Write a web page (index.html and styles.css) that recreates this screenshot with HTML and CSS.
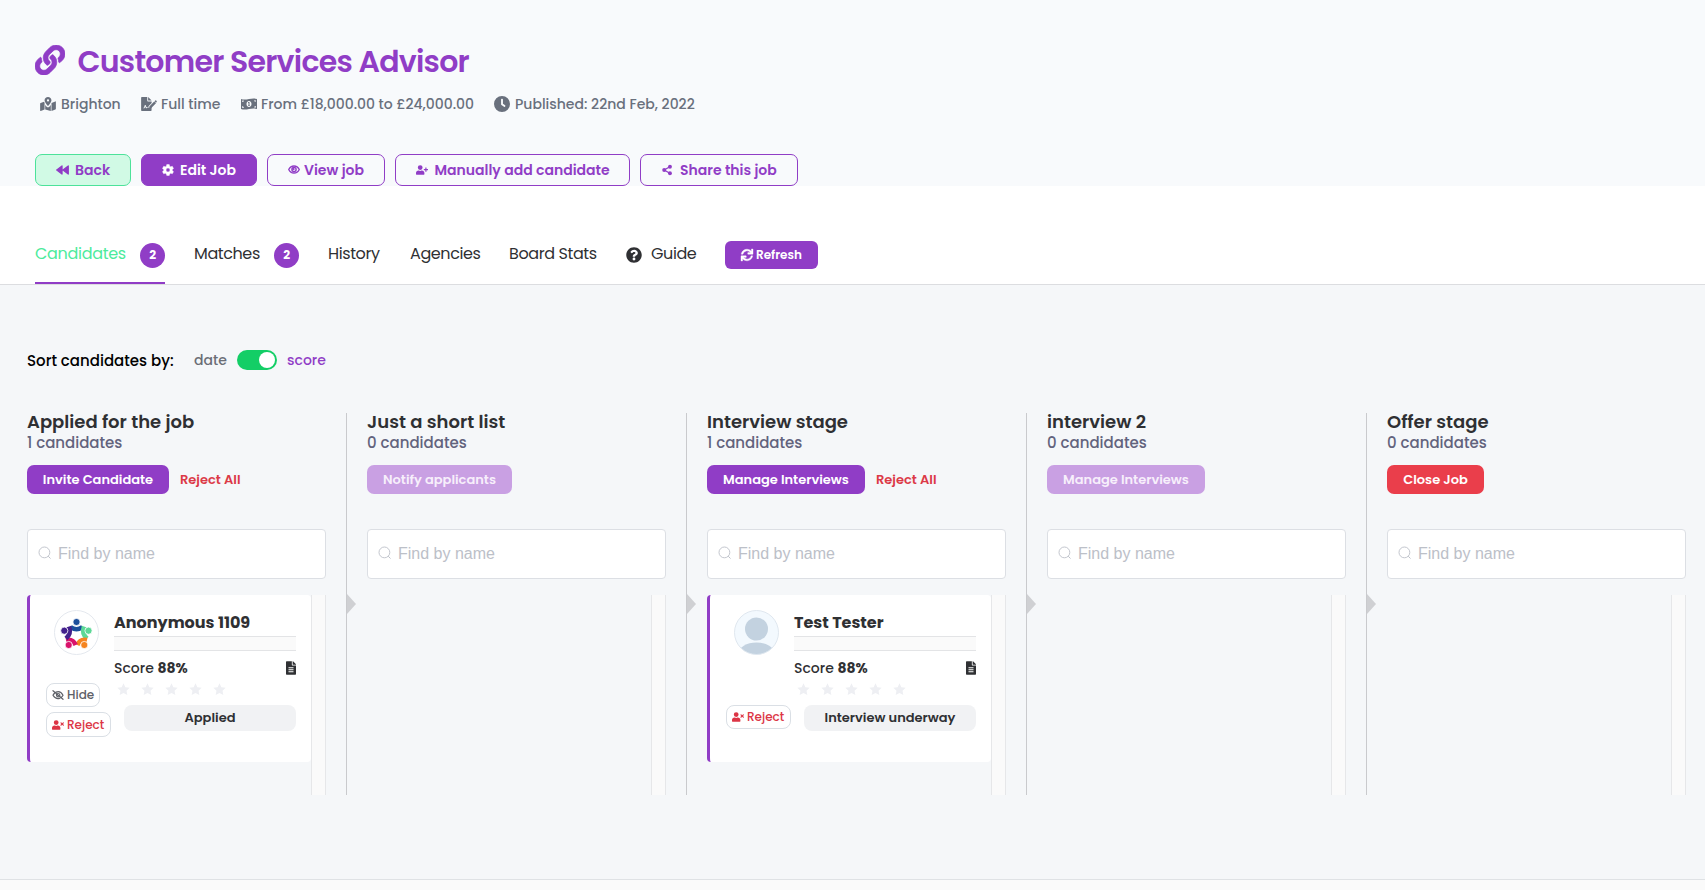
FILE: index.html
```html
<!DOCTYPE html>
<html lang="en">
<head>
<meta charset="utf-8">
<title>Customer Services Advisor</title>
<link rel="stylesheet" href="styles.css">
</head>
<body>
<svg class="defs" aria-hidden="true">
  <symbol id="search" viewBox="0 0 14 14"><circle cx="6.4" cy="6.4" r="5.4" fill="none" stroke="currentColor" stroke-width=".9"/><path d="M10.2 10.2 12.500 12.500" stroke="currentColor"/></symbol>
  <symbol id="star" viewBox="0 0 24 24"><path d="M12 .5l3.400 7.300 8 1-5.800 5.500 1.500 8L12 18.500l-7.100 3.800 1.500-8L.6 8.800l8-1z" fill="currentColor"/></symbol>
  <symbol id="doc" viewBox="0 0 384 512"><path fill="currentColor" fill-rule="evenodd" d="M224 136V0H24C10.700 0 0 10.700 0 24v464c0 13.300 10.700 24 24 24h336c13.300 0 24-10.700 24-24V160H248c-13.200 0-24-10.800-24-24zM288 420H96v-40h192zm0-76H96v-40h192zm0-76H96v-40h192zM384 122v6H256V0h6c6.400 0 12.500 2.500 17 7l98 98c4.500 4.500 7 10.600 7 17z"/></symbol>
  <symbol id="reject" viewBox="0 0 640 512"><path fill="currentColor" d="M224 256a128 128 0 1 0 0-256 128 128 0 0 0 0 256zm90 32h-17a174 174 0 0 1-146 0h-17C60 288 0 348 0 422v42c0 26.500 21.500 48 48 48h352c26.500 0 48-21.500 48-48v-42c0-74-60-134-134-134z"/><path d="M480 140l125 125M605 140L480 265" stroke="currentColor" stroke-width="62" stroke-linecap="round"/></symbol>
</svg>

<header class="header">
  <div class="title">
    <svg class="title-icon" viewBox="0 0 512 512" fill="currentColor"><path d="M326.612 185.391c59.747 59.809 58.927 155.698.36 214.59-.11.12-.24.25-.36.37l-67.2 67.2c-59.27 59.27-155.699 59.262-214.96 0-59.27-59.26-59.27-155.7 0-214.96l37.106-37.106c9.84-9.84 26.786-3.3 27.294 10.606.648 17.722 3.826 35.527 9.69 52.721 1.986 5.822.567 12.262-3.783 16.612l-13.087 13.087c-28.026 28.026-28.905 73.66-1.155 101.96 28.024 28.579 74.086 28.749 102.325.51l67.2-67.19c28.191-28.191 28.073-73.757 0-101.83-3.701-3.694-7.429-6.564-10.341-8.569a16.037 16.037 0 0 1-6.947-12.606c-.396-10.567 3.348-21.456 11.698-29.806l21.054-21.055c5.521-5.521 14.182-6.199 20.584-1.731a152.482 152.482 0 0 1 20.522 17.197zM467.547 44.449c-59.261-59.262-155.69-59.27-214.96 0l-67.2 67.2c-.12.12-.25.25-.36.37-58.566 58.892-59.387 154.781.36 214.59a152.454 152.454 0 0 0 20.521 17.196c6.402 4.468 15.064 3.789 20.584-1.731l21.054-21.055c8.35-8.35 12.094-19.239 11.698-29.806a16.037 16.037 0 0 0-6.947-12.606c-2.912-2.005-6.64-4.875-10.341-8.569-28.073-28.073-28.191-73.639 0-101.83l67.2-67.19c28.239-28.239 74.3-28.069 102.325.51 27.75 28.3 26.872 73.934-1.155 101.96l-13.087 13.087c-4.35 4.35-5.769 10.79-3.783 16.612 5.864 17.194 9.042 34.999 9.69 52.721.509 13.906 17.454 20.446 27.294 10.606l37.106-37.106c59.271-59.259 59.271-155.699.001-214.959z" stroke="currentColor" stroke-width="12"/></svg>
    <h1>Customer Services Advisor</h1>
  </div>
  <div class="meta">
    <div class="meta-item m-place"><svg viewBox="0 0 576 512" fill="currentColor"><path fill-rule="evenodd" d="M288 0c-70 0-126 56-126 126 0 56 82 155 113 191 7 8 19 8 26 0 31-36 113-135 113-191C414 56 358 0 288 0zm0 84a42 42 0 1 1 0 84 42 42 0 0 1 0-84z"/><path d="M20 216A32 32 0 0 0 0 246v250c0 11 11 19 22 15l140-55V214c-8-14-14-28-19-42zM186 290v168l204 52V290c-20 27-42 52-59 72-20 23-66 23-86 0-17-20-39-45-59-72zM554 161l-138 55v296l140-54c12-5 20-17 20-30V176c0-11-11-19-22-15z"/></svg><span>Brighton</span></div>
    <div class="meta-item m-type"><svg viewBox="0 0 576 512" fill="currentColor"><path d="M0 24C0 11 11 0 24 0h200v136c0 13 11 24 24 24h136v60L268 335v45l-30 4c-8-16-30-20-44-8l-22-66c-7-20-35-20-42 0l-22 66c-3 8-8 12-18 12v32c22 0 40-12 48-34l13-40 20 58c5 14 24 16 31 4l8-16h96l76-56v152c0 13-11 24-24 24H24c-13 0-24-11-24-24zM256 0l128 128H256z"/><path d="M300 345l178-178 64 64-178 178h-64zM492 153l28-28c8-8 20-8 28 0l20 20c10 9 10 25 0 35l-26 26z"/></svg><span>Full time</span></div>
    <div class="meta-item m-pay"><svg viewBox="0 0 32 24" fill="currentColor"><path fill-rule="evenodd" d="M0 2c11 4 21-4 32 0v20c-11-4-21 4-32 0zM2.500 5v3c2 0 3-1 3-3zm24-.5c0 2 1 3 3 3v-3zM2.500 16v4h3c0-2-1-4-3-4zm27 0c-2 0-3 1-3 3l3 .5zM16 6c-3 0-5 2.700-5 6s2 6 5 6 5-2.700 5-6-2-6-5-6z"/><path d="M15 8h2v6h1v1.500h-4V14h1v-4h-1V8.500z"/></svg><span>From £18,000.00 to £24,000.00</span></div>
    <div class="meta-item m-date"><svg viewBox="0 0 512 512" fill="currentColor"><path fill-rule="evenodd" d="M256 512a256 256 0 1 0 0-512 256 256 0 0 0 0 512zM226 110c0-13 10.700-24 24-24h12c13 0 24 11 24 24v136l70 52c10 8 12 22 5 32l-8 10c-8 10-23 12-33 5l-82-61c-8-6-12-14-12-24z"/></svg><span>Published: 22nd Feb, 2022</span></div>
  </div>
  <div class="actions">
    <button class="btn btn-back"><svg viewBox="0 0 26 20" fill="currentColor"><path d="M12 2v16L1.500 10zM24.500 2v16L14 10z" stroke="currentColor" stroke-width="2.600" stroke-linejoin="round"/></svg><span>Back</span></button>
    <button class="btn btn-edit"><svg viewBox="0 0 24 24" fill="currentColor"><path fill-rule="evenodd" d="M9.500 1h5l.7 3.300 2.200 1.300 3.200-1.100 2.500 4.400-2.500 2.200v2l2.500 2.200-2.500 4.300-3.200-1.100-2.200 1.300-.7 3.200h-5l-.7-3.200-2.200-1.300-3.200 1.100L.9 15.300l2.500-2.200v-2L.9 8.900l2.500-4.400 3.200 1.100 2.200-1.300zM12 8a4 4 0 1 0 0 8 4 4 0 0 0 0-8z" stroke="currentColor" stroke-width=".8" stroke-linejoin="round"/></svg><span>Edit Job</span></button>
    <button class="btn btn-view"><svg viewBox="0 0 24 18" fill="none" stroke="currentColor" stroke-width="2.800"><path d="M1.500 9C6-.500 18-.500 22.500 9 18 18.500 6 18.500 1.500 9z"/><circle cx="12" cy="9" r="4.200"/><circle cx="10.800" cy="8" r="1" fill="currentColor"/></svg><span>View job</span></button>
    <button class="btn btn-add"><svg viewBox="0 0 640 512" fill="currentColor"><path d="M224 256a128 128 0 1 0 0-256 128 128 0 0 0 0 256zm90 32h-17a174 174 0 0 1-146 0h-17C60 288 0 348 0 422v42c0 26.500 21.500 48 48 48h352c26.500 0 48-21.500 48-48v-42c0-74-60-134-134-134zM624 208h-64v-64c0-9-7-16-16-16h-32c-9 0-16 7-16 16v64h-64c-9 0-16 7-16 16v32c0 9 7 16 16 16h64v64c0 9 7 16 16 16h32c9 0 16-7 16-16v-64h64c9 0 16-7 16-16v-32c0-9-7-16-16-16z"/></svg><span>Manually add candidate</span></button>
    <button class="btn btn-share"><svg viewBox="0 0 22 24" fill="currentColor"><path d="M17 5L5 12l12 7" fill="none" stroke="currentColor" stroke-width="2.800"/><circle cx="17.500" cy="4.800" r="4.300"/><circle cx="4.800" cy="12" r="4.300"/><circle cx="17.500" cy="19.200" r="4.300"/></svg><span>Share this job</span></button>
  </div>
</header>

<nav class="tabs">
  <a class="tab tab-active"><span class="t-cand">Candidates</span><b class="badge">2</b></a>
  <a class="tab"><span class="t-match">Matches</span><b class="badge">2</b></a>
  <a class="tab"><span class="t-hist">History</span></a>
  <a class="tab"><span class="t-agen">Agencies</span></a>
  <a class="tab"><span class="t-board">Board Stats</span></a>
  <a class="tab"><svg class="help" viewBox="0 0 512 512" fill="currentColor"><path d="M504 256c0 136.997-111.043 248-248 248S8 392.997 8 256C8 119.083 119.043 8 256 8s248 111.083 248 248zM262.655 90c-54.497 0-89.255 22.957-116.549 63.758-3.536 5.286-2.353 12.415 2.715 16.258l34.699 26.310c5.205 3.947 12.621 3.008 16.665-2.122 17.864-22.658 30.113-35.797 57.303-35.797 20.429 0 45.698 13.148 45.698 32.958 0 14.976-12.363 22.667-32.534 33.976C247.128 238.528 216 254.941 216 296v4c0 6.627 5.373 12 12 12h56c6.627 0 12-5.373 12-12v-1.333c0-28.462 83.186-29.647 83.186-106.667 0-58.002-60.165-102-116.531-102zM256 338c-25.365 0-46 20.635-46 46 0 25.364 20.635 46 46 46s46-20.636 46-46c0-25.365-20.635-46-46-46z"/></svg><span class="t-guide">Guide</span></a>
  <button class="refresh"><svg viewBox="0 0 512 512" fill="currentColor"><path d="M440.65 12.57l4 82.77A247.16 247.16 0 0 0 255.83 8C134.73 8 33.91 94.92 12.29 209.82A12 12 0 0 0 24.09 224h49.05a12 12 0 0 0 11.67-9.26 175.91 175.91 0 0 1 317-56.94l-101.46-4.86a12 12 0 0 0-12.57 12v47.41a12 12 0 0 0 12 12H500a12 12 0 0 0 12-12V12a12 12 0 0 0-12-12h-47.37a12 12 0 0 0-11.98 12.57zM255.83 432a175.61 175.61 0 0 1-146-77.8l101.8 4.87a12 12 0 0 0 12.57-12v-47.4a12 12 0 0 0-12-12H12a12 12 0 0 0-12 12V500a12 12 0 0 0 12 12h47.35a12 12 0 0 0 12-12.600l-4.150-82.570A247.17 247.17 0 0 0 255.83 504c121.11 0 221.93-86.920 243.55-201.820a12 12 0 0 0-11.800-14.180h-49.050a12 12 0 0 0-11.670 9.260A175.86 175.86 0 0 1 255.83 432z" stroke="currentColor" stroke-width="16"/></svg><span>Refresh</span></button>
</nav>

<main class="main">
  <div class="sort">
    <span class="sort-label">Sort candidates by:</span>
    <span class="sort-date">date</span>
    <span class="toggle"></span>
    <span class="sort-score">score</span>
  </div>

  <div class="board">
    <section class="column">
      <h2>Applied for the job</h2>
      <p class="count">1 candidates</p>
      <div class="stage-actions"><button class="stage-btn w-invite">Invite Candidate</button><a class="reject-all">Reject All</a></div>
      <div class="search"><svg><use href="#search"/></svg><span>Find by name</span></div>
      <div class="list">
        <div class="cards">
          <article class="card">
            <div class="side">
              <svg class="avatar" viewBox="0 0 45 45">
                <circle cx="22.500" cy="22.500" r="22" fill="#fff" stroke="#e4e8ee"/>
                <g fill="none" stroke-width="4.600">
                  <path d="M16.500 17Q22.500 21.500 28.500 17" stroke="#1c4f9c"/>
                  <path d="M30 16.500Q27.500 23.500 33 28.500" stroke="#5cd896"/>
                  <path d="M33 30Q26 28.500 23.300 35" stroke="#f5841f"/>
                  <path d="M21.700 35Q19 28.500 12 30" stroke="#d9126b"/>
                  <path d="M12 28.500Q17.500 23.500 15 16.500" stroke="#43208c"/>
                </g>
                <g stroke="#fff" stroke-width=".8"><circle cx="22.500" cy="12" r="3.600" fill="#1c4f9c"/><circle cx="34.500" cy="20.700" r="3.600" fill="#5cd896"/><circle cx="30.300" cy="35" r="3.600" fill="#f5841f"/><circle cx="14.700" cy="35" r="3.600" fill="#d9126b"/><circle cx="10.300" cy="20.700" r="3.600" fill="#43208c"/></g>
              </svg>
              <button class="mini hide"><svg viewBox="0 0 24 20" fill="none" stroke="currentColor" stroke-width="2.400" stroke-linecap="round"><path d="M2 1.500l20 17M5 6.500Q3 8.500 2 10.500 8 20 16 16.500M8 4.300Q17 1 22 10.500 21 12.500 19.500 13.700M9 8.500q-.5 5 4.500 5.500M11.500 6.500q4 0 4.500 4"/></svg><span>Hide</span></button>
              <button class="mini reject"><svg><use href="#reject"/></svg><span>Reject</span></button>
            </div>
            <div class="details">
              <h3>Anonymous 1109</h3>
              <div class="strip"></div>
              <div class="score"><span>Score <b>88%</b></span><svg><use href="#doc"/></svg></div>
              <div class="stars"><svg><use href="#star"/></svg><svg><use href="#star"/></svg><svg><use href="#star"/></svg><svg><use href="#star"/></svg><svg><use href="#star"/></svg></div>
              <div class="status">Applied</div>
            </div>
          </article>
        </div>
        <div class="track"></div>
      </div>
    </section>

    <section class="column divided">
      <i class="arrow"></i>
      <h2>Just a short list</h2>
      <p class="count">0 candidates</p>
      <div class="stage-actions"><button class="stage-btn faded w-notify">Notify applicants</button></div>
      <div class="search"><svg><use href="#search"/></svg><span>Find by name</span></div>
      <div class="list"><div class="cards"></div><div class="track"></div></div>
    </section>

    <section class="column divided">
      <i class="arrow"></i>
      <h2>Interview stage</h2>
      <p class="count">1 candidates</p>
      <div class="stage-actions"><button class="stage-btn w-manage">Manage Interviews</button><a class="reject-all">Reject All</a></div>
      <div class="search"><svg><use href="#search"/></svg><span>Find by name</span></div>
      <div class="list">
        <div class="cards">
          <article class="card">
            <div class="side">
              <svg class="avatar" viewBox="0 0 45 45">
                <clipPath id="face"><circle cx="22.500" cy="22.500" r="22"/></clipPath>
                <circle cx="22.500" cy="22.500" r="22" fill="#f3f9fe"/>
                <g clip-path="url(#face)" fill="#c3d2e0"><circle cx="22.500" cy="19" r="11.500"/><ellipse cx="22.500" cy="43.500" rx="18" ry="11"/></g>
                <circle cx="22.500" cy="22.500" r="22" fill="none" stroke="#dfe7ef"/>
              </svg>
              <button class="mini reject low"><svg><use href="#reject"/></svg><span>Reject</span></button>
            </div>
            <div class="details">
              <h3>Test Tester</h3>
              <div class="strip"></div>
              <div class="score"><span>Score <b>88%</b></span><svg><use href="#doc"/></svg></div>
              <div class="stars"><svg><use href="#star"/></svg><svg><use href="#star"/></svg><svg><use href="#star"/></svg><svg><use href="#star"/></svg><svg><use href="#star"/></svg></div>
              <div class="status">Interview underway</div>
            </div>
          </article>
        </div>
        <div class="track"></div>
      </div>
    </section>

    <section class="column divided">
      <i class="arrow"></i>
      <h2>interview 2</h2>
      <p class="count">0 candidates</p>
      <div class="stage-actions"><button class="stage-btn faded w-manage">Manage Interviews</button></div>
      <div class="search"><svg><use href="#search"/></svg><span>Find by name</span></div>
      <div class="list"><div class="cards"></div><div class="track"></div></div>
    </section>

    <section class="column divided">
      <i class="arrow"></i>
      <h2>Offer stage</h2>
      <p class="count">0 candidates</p>
      <div class="stage-actions"><button class="stage-btn danger w-close">Close Job</button></div>
      <div class="search"><svg><use href="#search"/></svg><span>Find by name</span></div>
      <div class="list"><div class="cards"></div><div class="track"></div></div>
    </section>
  </div>
</main>
<footer class="footer"></footer>
</body>
</html>
```
FILE: styles.css
```css
* { box-sizing: border-box; }
body {
  margin: 0;
  height: 890px;
  overflow: hidden;
  display: flex;
  flex-direction: column;
  background: #f5f7f9;
  color: #2f3033;
  font: 500 14px/20px Poppins, Inter, sans-serif;
  white-space: nowrap;
}
h1, h2, h3, p { margin: 0; }
svg { display: block; flex: none; }
button { margin: 0; padding: 0; font-family: inherit; white-space: nowrap; }
.defs { position: absolute; width: 0; height: 0; }

/* Header */
.header { height: 186px; padding: 43px 35px 0; background: #f8fafc; }
.title { display: flex; height: 37px; align-items: center; gap: 12.5px; color: #903dc6; }
.title-icon { width: 30px; height: 30px; margin-bottom: 3px; }
h1 { font-size: 30px; font-weight: 600; line-height: 37px; letter-spacing: -0.75px; }
.meta { display: flex; gap: 20px; margin-top: 14px; padding-left: 5px; color: #69707d; }
.meta-item { display: flex; align-items: center; gap: 5px; height: 20px; }
.meta-item svg { width: 16px; height: 14px; }
.m-place { width: 81px; }
.m-type { width: 80px; gap: 4px; }
.m-pay { width: 233px; gap: 4px; }
.m-date svg { height: 16px; }
.actions { display: flex; gap: 10px; margin-top: 40px; }
.btn {
  display: flex;
  align-items: center;
  height: 32px;
  border: 1px solid #903dc6;
  border-radius: 7px;
  background: transparent;
  color: #903dc6;
  font-size: 14px;
  font-weight: 600;
}
.btn-back { width: 96px; padding-left: 20px; gap: 6px; background: #d1fae5; border-color: #4de29a; }
.btn-back svg { width: 13px; height: 10px; }
.btn-edit { width: 116px; padding-left: 20px; gap: 6px; background: #903dc6; color: #fff; }
.btn-edit svg { width: 12px; height: 12px; }
.btn-view { width: 118px; padding-left: 20px; gap: 4px; }
.btn-view svg { width: 12px; height: 9px; margin-bottom: 2px; }
.btn-add { width: 235px; padding-left: 20px; gap: 6.500px; }
.btn-add svg { width: 12px; height: 10px; }
.btn-share { width: 158px; padding-left: 21px; gap: 8px; }
.btn-share svg { width: 10px; height: 12px; }

/* Tabs */
.tabs {
  display: flex;
  gap: 29px;
  height: 99px;
  padding: 55px 35px 0;
  background: #fff;
  border-bottom: 1px solid #dcdde0;
}
.tab { display: flex; height: 43px; font-size: 16px; font-weight: 400; line-height: 25px; letter-spacing: -0.4px; }
.tab-active { color: #4ceb9c; border-bottom: 2px solid #903dc6; }
.badge {
  width: 25px;
  height: 25px;
  margin: 2px 0 0 14px;
  border-radius: 50%;
  background: #903dc6;
  color: #fff;
  font-size: 12px;
  font-weight: 700;
  line-height: 24px;
  text-align: center;
}
.t-cand { width: 91px; letter-spacing: -0.3px; }
.t-match { width: 66px; }
.t-hist { width: 53px; }
.t-agen { width: 70px; }
.t-board { width: 88px; }
.t-guide { width: 45px; }
.help { width: 16px; height: 16px; margin: 6px 9px 0 0; }
.refresh {
  display: flex;
  align-items: center;
  gap: 3px;
  width: 93px;
  height: 28px;
  padding-left: 16px;
  border: 0;
  border-radius: 6px;
  background: #903dc6;
  color: #fff;
  font-size: 12px;
  font-weight: 600;
}
.refresh svg { width: 12px; height: 12px; overflow: visible; }

/* Sorting */
.main { height: 594px; flex: none; padding: 65px 0 0 6px; }
.sort { display: flex; align-items: center; height: 20px; padding-left: 21px; }
.sort-label { width: 167px; padding-top: 1px; color: #000; font-size: 15px; }
.sort-date { width: 43px; color: #6b6e76; }
.toggle { display: flex; justify-content: flex-end; align-items: center; width: 40px; height: 20px; padding-right: 2px; margin-right: 10px; border-radius: 10px; background: #13ce66; }
.toggle::after { content: ""; width: 16px; height: 16px; border-radius: 50%; background: #fff; }
.sort-score { color: #903dc6; }

/* Board */
.board { display: grid; grid-template-columns: repeat(5, 340px); height: 382px; margin-top: 43px; }
.column { position: relative; display: flex; flex-direction: column; padding: 0 20px; border-left: 1px solid transparent; }
.divided { border-left-color: #c9cacd; }
.arrow { position: absolute; left: 0; top: 181px; border: 10px solid transparent; border-left: 9px solid #cfd0d3; border-right: 0; }
h2 { height: 18px; font-size: 18px; font-weight: 600; line-height: 18px; }
.count { height: 20px; margin-top: 2px; color: #62637d; font-size: 15px; }
.stage-actions { display: flex; align-items: center; gap: 11px; height: 29px; margin-top: 12px; }
.stage-btn { height: 29px; border: 0; border-radius: 7px; background: #903dc6; color: #fff; font-size: 13px; font-weight: 600; }
.w-invite { width: 142px; }
.w-notify { width: 145px; }
.w-manage { width: 158px; }
.w-close { width: 97px; }
.faded { background: #c9a0e3; color: #f7effb; }
.danger { background: #ea3e4b; }
.reject-all { color: #dc3a47; font-size: 13px; font-weight: 600; }
.search {
  display: flex;
  align-items: center;
  gap: 6px;
  width: 299px;
  height: 50px;
  margin-top: 35px;
  padding-left: 10px;
  border: 1px solid #dcdfe4;
  border-radius: 4px;
  background: #fff;
  color: #bcc0c8;
  font: 400 16px/20px "Liberation Sans", Arial, sans-serif;
}
.search svg { width: 14px; height: 14px; margin-bottom: 2px; }
.list { display: flex; flex: 1; width: 299px; margin-top: 16px; }
.cards { width: 284px; }
.track { width: 15px; background: #fafafa; border: solid #e6e7e9; border-width: 0 1px; }

/* Cards */
.card { display: flex; height: 167px; padding: 15px 15px 0 16px; border-left: 3px solid #903dc6; border-radius: 4px; background: #fff; }
.side { width: 68px; }
.avatar { width: 45px; height: 45px; margin-left: 8px; }
.mini {
  display: flex;
  align-items: center;
  gap: 3px;
  height: 24px;
  padding-left: 5px;
  border: 1px solid #dadfe5;
  border-radius: 8px;
  background: #fff;
  font-size: 12px;
  font-weight: 500;
}
.mini svg { width: 12px; height: 10px; }
.hide { width: 54px; margin-top: 28px; color: #5e6168; }
.reject { width: 65px; height: 25px; margin-top: 5px; color: #dc3545; }
.low { height: 24px; margin-top: 50px; }
.details { width: 182px; }
h3 { height: 26px; font-size: 16px; font-weight: 700; line-height: 26px; }
.strip { height: 15px; background: #fafafa; border: solid #e3e4e6; border-width: 1px 0; }
.score { display: flex; align-items: center; justify-content: space-between; height: 20px; margin-top: 7px; }
.score b { font-weight: 700; }
.score svg { width: 10px; height: 14px; }
.stars { display: flex; gap: 11px; margin: 5px 0 0 2.500px; color: #eeeff3; }
.stars svg { width: 13px; height: 13px; }
.status { width: 172px; height: 26px; margin: 9px 0 0 10px; border-radius: 8px; background: #f1f2f4; font-size: 13px; font-weight: 600; line-height: 25px; text-align: center; }

.footer { flex: 1; background: #fafafa; border-top: 1px solid #dfe2e5; }
```
